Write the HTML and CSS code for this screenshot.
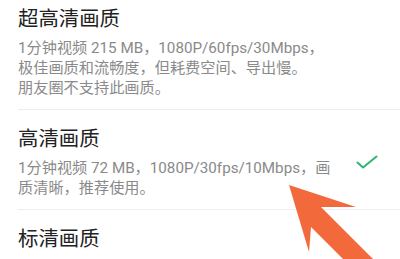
FILE: index.html
```html
<!DOCTYPE html>
<html lang="zh">
<head>
<meta charset="utf-8">
<link rel="stylesheet" href="styles.css">
</head>
<body>
<div class="page">
  <div class="list">
    <div class="item">
      <div class="text">
        <div class="title">超高清画质</div>
        <div class="desc">1分钟视频 215 MB，1080P/60fps/30Mbps，<br>极佳画质和流畅度，但耗费空间、导出慢。<br>朋友圈不支持此画质。</div>
      </div>
    </div>
    <div class="item">
      <div class="text">
        <div class="title">高清画质</div>
        <div class="desc">1分钟视频 72 MB，1080P/30fps/10Mbps，画<br>质清晰，推荐使用。</div>
      </div>
      <svg class="check" width="22" height="14" viewBox="0 0 22 14"><path d="M1.5 7.5 L7 12.5 L20.5 1.5" fill="none" stroke="#2bb673" stroke-width="2" stroke-linecap="round" stroke-linejoin="round"/></svg>
    </div>
    <div class="item">
      <div class="text">
        <div class="title">标清画质</div>
      </div>
    </div>
  </div>
  <svg class="arrow" width="400" height="259" viewBox="0 0 400 259"><polygon points="289,185 356,207 321,207 376,262 346,262 311,227 309,252" fill="#f26a3b"/></svg>
</div>
</body>
</html>
```
FILE: styles.css
```css
html, body {
  margin: 0;
  padding: 0;
  background: #ffffff;
}
.page {
  position: relative;
  width: 400px;
  height: 259px;
  overflow: hidden;
  font-family: "Roboto", "Noto Sans CJK SC", sans-serif;
}
.list {
  display: flex;
  flex-direction: column;
}
.item {
  display: flex;
  align-items: center;
  margin-left: 18px;
  padding: 16px 22px 11px 0;
  border-bottom: 1px solid #eeeeee;
}
.item:first-child {
  padding-top: 6px;
}
.text {
  flex: 1;
  display: flex;
  flex-direction: column;
  gap: 6px;
}
.title {
  font-size: 20.4px;
  line-height: 26px;
  color: #222222;
}
.desc {
  font-size: 15.2px;
  line-height: 20px;
  color: #8a8a8a;
  white-space: nowrap;
}
.check {
  flex: none;
}
.arrow {
  position: absolute;
  left: 0;
  top: 0;
}
```
